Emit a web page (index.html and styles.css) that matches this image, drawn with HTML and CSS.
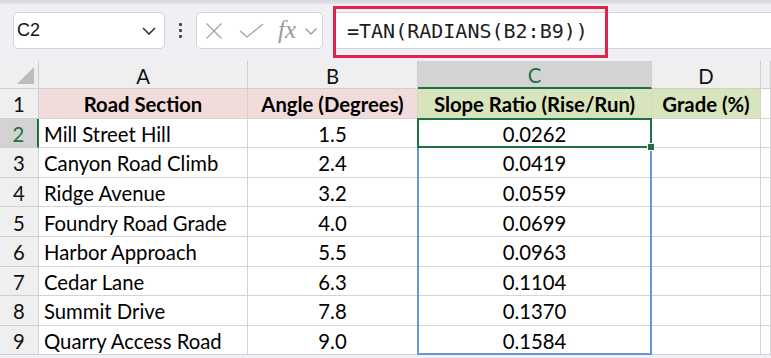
FILE: index.html
```html
<!DOCTYPE html>
<html>
<head>
<meta charset="utf-8">
<link rel="stylesheet" href="styles.css">
</head>
<body>
<div class="app">
  <div class="ribbon-edge"></div>
  <div class="fbar">
    <div class="namebox">
      <span class="nb-text">C2</span>
      <svg class="chev" width="14" height="8" viewBox="0 0 14 8"><path d="M1 1 L7 7 L13 1" fill="none" stroke="#333" stroke-width="1.6"/></svg>
    </div>
    <div class="dots"><i></i><i></i><i></i></div>
    <div class="fxbox">
      <svg class="ico" width="18" height="16" viewBox="0 0 18 16"><path d="M1.5 0.5 L16.5 15.5 M16.5 0.5 L1.5 15.5" fill="none" stroke="#a3a3a3" stroke-width="1.3"/></svg>
      <svg class="ico" width="25" height="15" viewBox="0 0 25 15"><path d="M1 8 L8 14 L24 1" fill="none" stroke="#a3a3a3" stroke-width="1.3"/></svg>
      <span class="fx">fx</span>
      <svg class="ico small" width="12" height="7" viewBox="0 0 12 7"><path d="M0.5 0.5 L6 6 L11.5 0.5" fill="none" stroke="#9a9a9a" stroke-width="1.3"/></svg>
    </div>
    <div class="formula">
      <span class="ftext">=TAN(RADIANS(B2:B9))</span>
    </div>
  </div>
  <div class="sheet">
    <div class="cell hd corner"><span class="tri"></span></div>
    <div class="cell hd">A</div>
    <div class="cell hd">B</div>
    <div class="cell hd hd-sel">C</div>
    <div class="cell hd">D</div>
    <div class="cell hd"></div>

    <div class="cell rh">1</div>
    <div class="cell th pink">Road Section</div>
    <div class="cell th pink">Angle (Degrees)</div>
    <div class="cell th green">Slope Ratio (Rise/Run)</div>
    <div class="cell th green">Grade (%)</div>
    <div class="cell"></div>

    <div class="cell rh rh-sel">2</div>
    <div class="cell tl">Mill Street Hill</div>
    <div class="cell tc">1.5</div>
    <div class="cell tc">0.0262</div>
    <div class="cell"></div>
    <div class="cell"></div>

    <div class="cell rh">3</div>
    <div class="cell tl">Canyon Road Climb</div>
    <div class="cell tc">2.4</div>
    <div class="cell tc">0.0419</div>
    <div class="cell"></div>
    <div class="cell"></div>

    <div class="cell rh">4</div>
    <div class="cell tl">Ridge Avenue</div>
    <div class="cell tc">3.2</div>
    <div class="cell tc">0.0559</div>
    <div class="cell"></div>
    <div class="cell"></div>

    <div class="cell rh">5</div>
    <div class="cell tl">Foundry Road Grade</div>
    <div class="cell tc">4.0</div>
    <div class="cell tc">0.0699</div>
    <div class="cell"></div>
    <div class="cell"></div>

    <div class="cell rh">6</div>
    <div class="cell tl">Harbor Approach</div>
    <div class="cell tc">5.5</div>
    <div class="cell tc">0.0963</div>
    <div class="cell"></div>
    <div class="cell"></div>

    <div class="cell rh">7</div>
    <div class="cell tl">Cedar Lane</div>
    <div class="cell tc">6.3</div>
    <div class="cell tc">0.1104</div>
    <div class="cell"></div>
    <div class="cell"></div>

    <div class="cell rh">8</div>
    <div class="cell tl">Summit Drive</div>
    <div class="cell tc">7.8</div>
    <div class="cell tc">0.1370</div>
    <div class="cell"></div>
    <div class="cell"></div>

    <div class="cell rh">9</div>
    <div class="cell tl">Quarry Access Road</div>
    <div class="cell tc">9.0</div>
    <div class="cell tc">0.1584</div>
    <div class="cell"></div>
    <div class="cell"></div>

    <div class="spill"></div>
    <div class="sel"><span class="handle"></span></div>
  </div>
</div>
</body>
</html>
```
FILE: styles.css
```css
* { box-sizing: border-box; }
html, body { margin: 0; padding: 0; }
body {
  width: 771px;
  height: 358px;
  overflow: hidden;
  background: #ffffff;
}
.app {
  width: 771px;
  height: 358px;
  background: #eef0f3;
  display: flex;
  flex-direction: column;
  overflow: hidden;
}
.app > * { flex-shrink: 0; }
.ribbon-edge {
  height: 4px;
  background: linear-gradient(#d3d5d8, #e3e5e8);
}
.fbar {
  display: flex;
  align-items: center;
  padding: 8px 0 0 13px;
  height: 45px;
  margin-bottom: 12px;
}
.namebox {
  width: 152px;
  height: 37px;
  background: #fff;
  border: 1px solid #d3d3d3;
  border-radius: 5px;
  display: flex;
  align-items: center;
  justify-content: space-between;
  padding: 0 8px 0 3px;
}
.nb-text {
  font-family: "Liberation Sans", Arial, sans-serif;
  font-size: 18px;
  color: #111;
}
.chev { display: block; margin-top: 1px; }
.dots {
  width: 31px;
  display: flex;
  flex-direction: column;
  align-items: center;
  gap: 3px;
}
.dots i {
  display: block;
  width: 3px;
  height: 3px;
  background: #444;
  border-radius: 1px;
}
.fxbox {
  width: 127px;
  height: 37px;
  background: #fff;
  border: 1px solid #d3d3d3;
  border-radius: 5px;
  display: flex;
  align-items: center;
  padding-left: 8px;
}
.ico { display: block; }
.fxbox .ico:nth-child(2) { margin-left: 16px; }
.fx {
  font-family: "Liberation Serif", "Times New Roman", serif;
  font-style: italic;
  font-size: 25px;
  color: #9a9a9a;
  margin-left: 14px;
  letter-spacing: 0;
  line-height: 1;
  margin-top: -3px;
}
.ico.small { margin-left: 9px; margin-top: 1px; }
.formula {
  position: relative;
  flex: 1;
  height: 37px;
  margin-left: 10px;
  background: #fff;
  border-top: 1px solid #d3d3d3;
  border-bottom: 1px solid #d3d3d3;
  display: flex;
  align-items: center;
  padding-left: 14px;
}
.formula::before {
  content: "";
  position: absolute;
  left: 0;
  top: -7px;
  width: 269px;
  height: 46px;
  border: 3px solid #e0224c;
}
.ftext {
  font-family: "DejaVu Sans Mono", monospace;
  font-size: 20px;
  color: #1d1d1d;
}
.sheet {
  position: relative;
  display: grid;
  grid-template-columns: 39px 209px 170px 234px 109px 1fr;
  grid-template-rows: 28px repeat(9, 29.6px);
  background: #fff;
  font-family: Lato, "Liberation Sans", sans-serif;
  font-size: 20.3px;
  color: #000;
}
.cell {
  border-right: 1px solid #d4d4d4;
  border-bottom: 1px solid #d4d4d4;
  display: flex;
  align-items: center;
  white-space: nowrap;
  overflow: hidden;
  padding-top: 2px;
}
.hd {
  background: #efefef;
  border-color: #cfcfcf;
  justify-content: center;
  color: #111;
}
.corner {
  position: relative;
}
.tri {
  position: absolute;
  right: 4px;
  bottom: 4px;
  width: 0;
  height: 0;
  border-left: 17px solid transparent;
  border-bottom: 17px solid #bcbcbc;
}
.hd-sel {
  background: #d3d3d3;
  color: #1e7145;
  border-bottom: 2px solid #1e7145;
}
.rh {
  background: #efefef;
  border-color: #cfcfcf;
  justify-content: center;
  color: #111;
}
.rh-sel {
  background: #d3d3d3;
  color: #1e7145;
  border-right: 2px solid #1e7145;
}
.th {
  font-weight: bold;
  justify-content: center;
}
.pink { background: #f2dcdb; }
.green { background: #d8e4bc; }
.tl { padding-left: 5px; }
.tc { justify-content: center; }
.spill {
  position: absolute;
  grid-column: 4 / 5;
  grid-row: 3 / 11;
  top: -1px;
  left: -1px;
  right: 0;
  bottom: 0;
  border: 2px solid #6b95d6;
  pointer-events: none;
}
.sel {
  position: absolute;
  grid-column: 4 / 5;
  grid-row: 3 / 4;
  top: -1px;
  left: -1px;
  right: 0;
  bottom: 0;
  border: 2px solid #1e7145;
  pointer-events: none;
}
.handle {
  position: absolute;
  right: -5px;
  bottom: -5px;
  width: 8px;
  height: 8px;
  background: #1e7145;
  border: 1px solid #fff;
}
```
